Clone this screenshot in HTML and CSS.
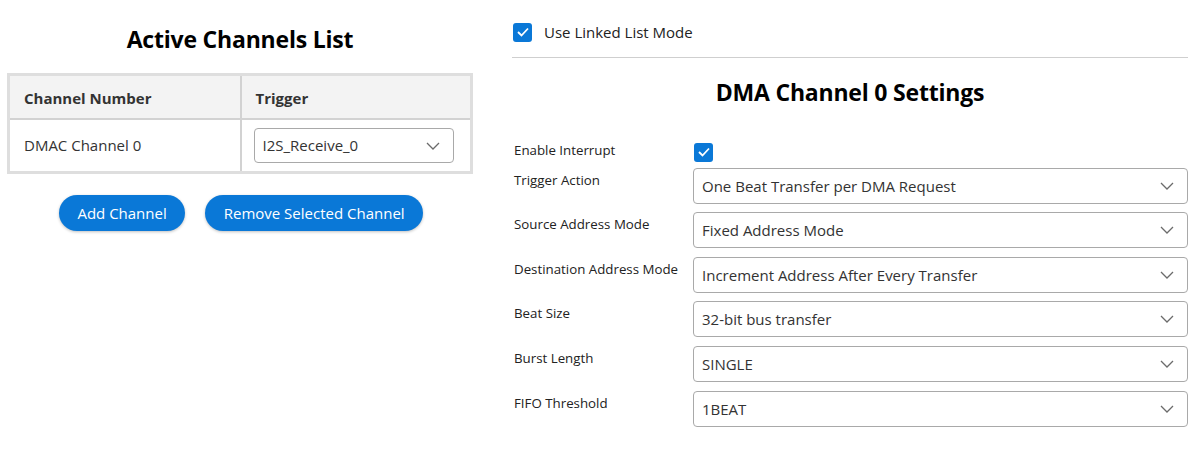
FILE: index.html
```html
<!DOCTYPE html>
<html>
<head>
<meta charset="utf-8">
<link rel="stylesheet" href="styles.css">
</head>
<body>
<div class="page">
  <section class="left">
    <h2 class="title">Active Channels List</h2>
    <table class="chan-table">
      <thead>
        <tr><th class="col1">Channel Number</th><th>Trigger</th></tr>
      </thead>
      <tbody>
        <tr>
          <td>DMAC Channel 0</td>
          <td>
            <div class="sel small">
              <select><option>I2S_Receive_0</option></select>
              <svg class="chev" width="14" height="8" viewBox="0 0 14 8"><path d="M1 1 L7 7 L13 1" fill="none" stroke="#6b6b6b" stroke-width="1.3"/></svg>
            </div>
          </td>
        </tr>
      </tbody>
    </table>
    <div class="btns">
      <button class="btn">Add Channel</button>
      <button class="btn">Remove Selected Channel</button>
    </div>
  </section>
  <section class="right">
    <label class="linked">
      <span class="cb"><svg width="12" height="10" viewBox="0 0 12 10"><path d="M1 5 L4.5 8.5 L11 1.5" fill="none" stroke="#fff" stroke-width="1.8"/></svg></span>
      <span>Use Linked List Mode</span>
    </label>
    <hr class="rule">
    <h2 class="title title2">DMA Channel 0 Settings</h2>
    <div class="form">
      <div class="lbl">Enable Interrupt</div>
      <div class="ctl cbrow"><span class="cb"><svg width="12" height="10" viewBox="0 0 12 10"><path d="M1 5 L4.5 8.5 L11 1.5" fill="none" stroke="#fff" stroke-width="1.8"/></svg></span></div>

      <div class="lbl pad">Trigger Action</div>
      <div class="sel"><select><option>One Beat Transfer per DMA Request</option></select><svg class="chev" width="14" height="8" viewBox="0 0 14 8"><path d="M1 1 L7 7 L13 1" fill="none" stroke="#6b6b6b" stroke-width="1.3"/></svg></div>

      <div class="lbl pad">Source Address Mode</div>
      <div class="sel"><select><option>Fixed Address Mode</option></select><svg class="chev" width="14" height="8" viewBox="0 0 14 8"><path d="M1 1 L7 7 L13 1" fill="none" stroke="#6b6b6b" stroke-width="1.3"/></svg></div>

      <div class="lbl pad">Destination Address Mode</div>
      <div class="sel"><select><option>Increment Address After Every Transfer</option></select><svg class="chev" width="14" height="8" viewBox="0 0 14 8"><path d="M1 1 L7 7 L13 1" fill="none" stroke="#6b6b6b" stroke-width="1.3"/></svg></div>

      <div class="lbl pad">Beat Size</div>
      <div class="sel"><select><option>32-bit bus transfer</option></select><svg class="chev" width="14" height="8" viewBox="0 0 14 8"><path d="M1 1 L7 7 L13 1" fill="none" stroke="#6b6b6b" stroke-width="1.3"/></svg></div>

      <div class="lbl pad">Burst Length</div>
      <div class="sel"><select><option>SINGLE</option></select><svg class="chev" width="14" height="8" viewBox="0 0 14 8"><path d="M1 1 L7 7 L13 1" fill="none" stroke="#6b6b6b" stroke-width="1.3"/></svg></div>

      <div class="lbl pad">FIFO Threshold</div>
      <div class="sel"><select><option>1BEAT</option></select><svg class="chev" width="14" height="8" viewBox="0 0 14 8"><path d="M1 1 L7 7 L13 1" fill="none" stroke="#6b6b6b" stroke-width="1.3"/></svg></div>
    </div>
  </section>
</div>
</body>
</html>
```

FILE: styles.css
```css
* { box-sizing: border-box; }
html, body { margin: 0; padding: 0; background: #fff; }
body {
  font-family: "Open Sans", "Noto Sans", "Liberation Sans", sans-serif;
  color: #222;
}
.page {
  display: flex;
  align-items: flex-start;
  width: 1204px;
  height: 457px;
}
.left {
  width: 480px;
  padding: 0 7px;
}
.title {
  margin: 0;
  text-align: center;
  font-size: 23px;
  font-weight: 700;
  color: #000;
  letter-spacing: -0.2px;
}
.left .title {
  padding-top: 24px;
  height: 73px;
  line-height: 30px;
}
.chan-table {
  width: 466px;
  border-collapse: collapse;
  border: 3px solid #dedede;
  font-size: 15px;
}
.chan-table th, .chan-table td {
  border: 2px solid #d2d2d2;
  text-align: left;
  padding: 0 14px;
}
.chan-table th {
  background: #f3f3f3;
  height: 44px;
  font-weight: 700;
  color: #333;
  padding-top: 2px;
}
.chan-table th.col1 { width: 232px; }
.chan-table td {
  height: 54px;
  color: #333;
}
.sel {
  position: relative;
  height: 36px;
}
.sel select {
  appearance: none;
  -webkit-appearance: none;
  width: 100%;
  height: 100%;
  border: 1px solid #a9a9a9;
  border-radius: 4px;
  background: #fff;
  font-family: inherit;
  font-size: 15px;
  color: #333;
  padding: 0 8px;
  outline: none;
}
.sel.small {
  width: 200px;
  height: 35px;
  margin-left: -2px;
}
.chev {
  position: absolute;
  right: 14px;
  top: 14px;
  pointer-events: none;
}
.btns {
  display: flex;
  justify-content: center;
  gap: 20px;
  margin-top: 21px;
  padding-left: 2px;
}
.btn {
  height: 36px;
  border: none;
  border-radius: 18px;
  background: #0a78d7;
  color: #fff;
  font-family: inherit;
  font-size: 15px;
  padding: 0 18.5px;
  box-shadow: 0 1px 3px rgba(0,0,0,0.25);
}
.right {
  width: 676px;
  margin-left: 32px;
}
.linked {
  display: flex;
  align-items: center;
  gap: 12px;
  height: 20px;
  margin-top: 22px;
  padding-left: 1px;
  font-size: 15px;
  color: #222;
}
.cb {
  display: inline-flex;
  align-items: center;
  justify-content: center;
  width: 19px;
  height: 19px;
  border-radius: 3px;
  background: #0a78d7;
}
.rule {
  border: none;
  border-top: 1px solid #cfcfcf;
  margin: 15px 0 0;
}
.title2 {
  margin-top: 19px;
  line-height: 30px;
}
.form {
  display: grid;
  grid-template-columns: 181px 1fr;
  row-gap: 8.6px;
  margin-top: 33px;
}
.lbl {
  font-size: 13.3px;
  color: #222;
  padding-left: 2px;
  line-height: 18px;
}
.lbl.pad { padding-top: 3px; }
.cbrow {
  padding-left: 1px;
  height: 19px;
}
.form .lbl:first-child { padding-top: 1px; }
```
